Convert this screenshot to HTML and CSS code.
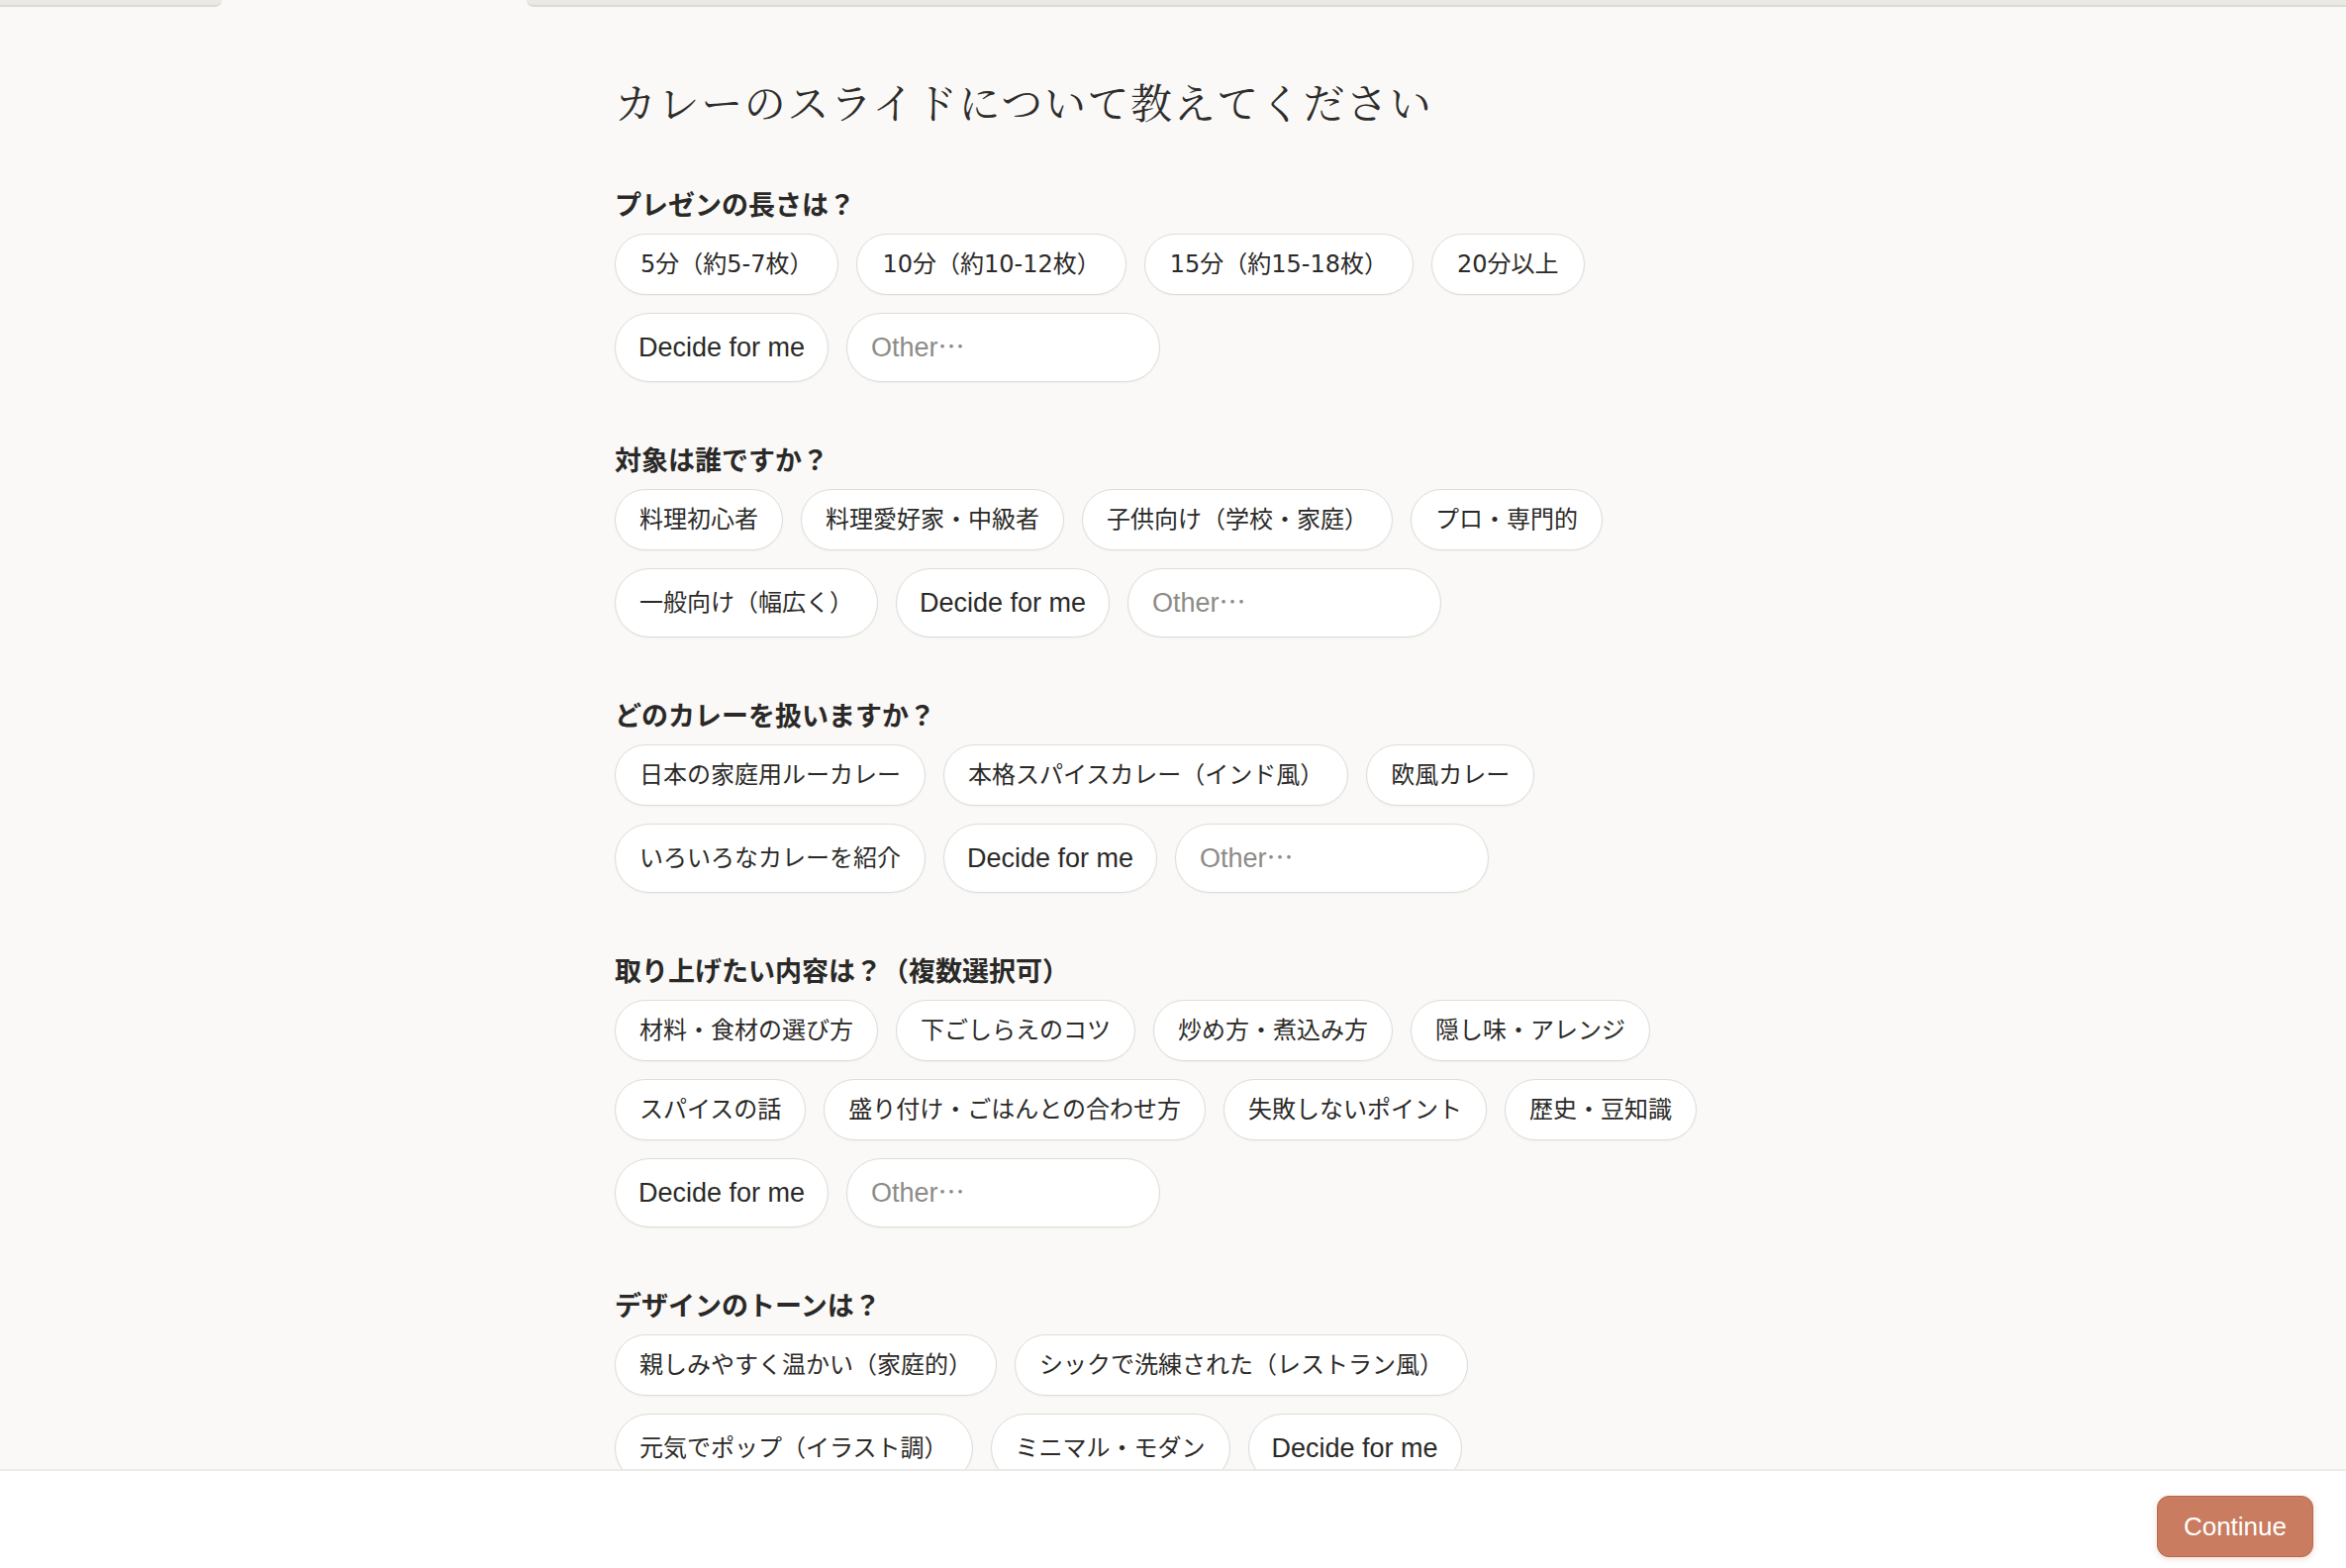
FILE: index.html
```html
<!DOCTYPE html>
<html lang="ja">
<head>
    <meta charset="UTF-8">
    <meta name="viewport" content="width=device-width, initial-scale=1.0">
    <title>カレーのスライド</title>
    <link rel="stylesheet" href="styles.css">
</head>
<body>
    <div class="tabs">
        <div class="tab tab-left"></div>
        <div class="tab tab-right"></div>
    </div>

    <div class="page">
        <main class="form">
            <h1>カレーのスライドについて教えてください</h1>

            <section class="question">
                <h2>プレゼンの長さは？</h2>
                <div class="options">
                    <button class="chip num">5分（約5-7枚）</button>
                    <button class="chip num">10分（約10-12枚）</button>
                    <button class="chip num">15分（約15-18枚）</button>
                    <button class="chip num">20分以上</button>
                    <button class="chip decide">Decide for me</button>
                    <input class="other" type="text" placeholder="Other⋯">
                </div>
            </section>

            <section class="question">
                <h2>対象は誰ですか？</h2>
                <div class="options">
                    <button class="chip">料理初心者</button>
                    <button class="chip">料理愛好家・中級者</button>
                    <button class="chip">子供向け（学校・家庭）</button>
                    <button class="chip">プロ・専門的</button>
                    <button class="chip">一般向け（幅広く）</button>
                    <button class="chip decide">Decide for me</button>
                    <input class="other" type="text" placeholder="Other⋯">
                </div>
            </section>

            <section class="question">
                <h2>どのカレーを扱いますか？</h2>
                <div class="options">
                    <button class="chip">日本の家庭用ルーカレー</button>
                    <button class="chip">本格スパイスカレー（インド風）</button>
                    <button class="chip">欧風カレー</button>
                    <button class="chip">いろいろなカレーを紹介</button>
                    <button class="chip decide">Decide for me</button>
                    <input class="other" type="text" placeholder="Other⋯">
                </div>
            </section>

            <section class="question">
                <h2>取り上げたい内容は？（複数選択可）</h2>
                <div class="options">
                    <button class="chip">材料・食材の選び方</button>
                    <button class="chip">下ごしらえのコツ</button>
                    <button class="chip">炒め方・煮込み方</button>
                    <button class="chip">隠し味・アレンジ</button>
                    <button class="chip">スパイスの話</button>
                    <button class="chip">盛り付け・ごはんとの合わせ方</button>
                    <button class="chip">失敗しないポイント</button>
                    <button class="chip">歴史・豆知識</button>
                    <button class="chip decide">Decide for me</button>
                    <input class="other" type="text" placeholder="Other⋯">
                </div>
            </section>

            <section class="question">
                <h2>デザインのトーンは？</h2>
                <div class="options">
                    <button class="chip">親しみやすく温かい（家庭的）</button>
                    <button class="chip">シックで洗練された（レストラン風）</button>
                    <button class="chip">元気でポップ（イラスト調）</button>
                    <button class="chip">ミニマル・モダン</button>
                    <button class="chip decide">Decide for me</button>
                    <input class="other" type="text" placeholder="Other⋯">
                </div>
            </section>
        </main>
    </div>

    <footer class="bar">
        <button class="continue">Continue</button>
    </footer>
</body>
</html>
```

FILE: styles.css
```css
html, body {
    height: 100%;
}
body {
    margin: 0;
    display: flex;
    flex-direction: column;
    overflow: hidden;
    background-color: #faf9f7;
    color: #2b2a28;
    font-family: "Liberation Sans", "Noto Sans CJK JP", sans-serif;
}

/* cut-off tabs at the very top */
.tabs {
    display: flex;
    gap: 308px;
    height: 7px;
    flex-shrink: 0;
}
.tab {
    background-color: #ebe9e4;
    border-bottom: 2px solid #dcdad4;
    box-sizing: border-box;
}
.tab-left {
    width: 224px;
    border-bottom-right-radius: 14px;
}
.tab-right {
    flex: 1;
    border-bottom-left-radius: 14px;
}

.page {
    flex: 1;
    overflow: hidden;
}
.form {
    width: 1128px;
    margin: 0 auto;
    padding-top: 66px;
}
.form h1 {
    margin: 0 0 55px;
    font-family: "Noto Serif CJK JP", "Liberation Serif", serif;
    font-weight: normal;
    font-size: 42px;
    line-height: 59px;
    letter-spacing: 1.6px;
    color: #2e2d2b;
}

.question + .question {
    margin-top: 59px;
}
.question h2 {
    margin: 0 0 11px;
    font-family: "Noto Sans CJK JP", sans-serif;
    font-weight: bold;
    font-size: 27px;
    line-height: 38px;
    color: #2a2927;
}
.options {
    display: flex;
    flex-wrap: wrap;
    gap: 18px 18px;
}

.chip {
    padding: 12px 24px;
    font-family: inherit;
    font-size: 24px;
    line-height: 36px;
    color: #2b2a28;
    background-color: #fff;
    border: 1px solid #dedcd7;
    border-radius: 999px;
    box-shadow: 0 1px 2px rgba(0, 0, 0, 0.04);
    cursor: pointer;
}
.chip.num {
    padding: 12px 25px;
    font-family: "DejaVu Sans", "Noto Sans CJK JP", sans-serif;
}
.chip.decide {
    padding: 16px 23px;
    font-family: "Liberation Sans", sans-serif;
    font-size: 27px;
}
.other {
    width: 317px;
    height: 70px;
    box-sizing: border-box;
    padding: 0 24px;
    font-family: "Liberation Sans", "Noto Sans CJK JP", sans-serif;
    font-size: 27px;
    color: #2b2a28;
    background-color: #fff;
    border: 1px solid #dedcd7;
    border-radius: 999px;
    box-shadow: 0 1px 2px rgba(0, 0, 0, 0.04);
    outline: none;
}
.other::placeholder {
    color: #8d8b87;
}

.bar {
    flex-shrink: 0;
    height: 100px;
    box-sizing: border-box;
    display: flex;
    justify-content: flex-end;
    align-items: flex-start;
    padding: 25px 33px 0;
    background-color: #fff;
    border-top: 2px solid #ecebe8;
}
.continue {
    padding: 0 26px;
    height: 62px;
    font-family: "Liberation Sans", sans-serif;
    font-size: 26px;
    color: #fff;
    background-color: #c97c5f;
    border: 1px solid #b66a4e;
    border-radius: 12px;
    box-shadow: 0 2px 6px rgba(201, 124, 95, 0.25);
    cursor: pointer;
}
```
